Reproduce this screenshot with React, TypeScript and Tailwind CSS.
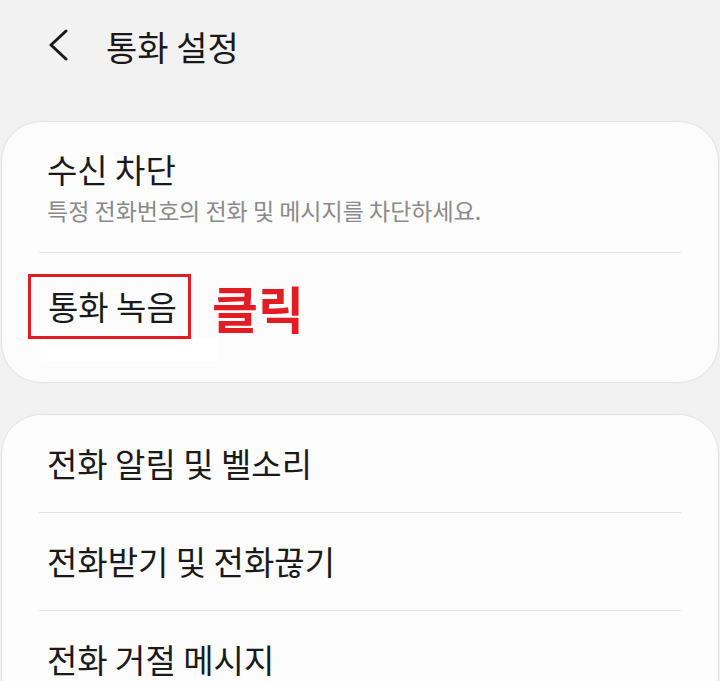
import React from "react";

const font = { fontFamily: '"Noto Sans CJK KR", "Noto Sans", sans-serif' };

function Row({ title, last }: { title: string; last?: boolean }) {
  return (
    <div className="px-[37px]">
      <div className={`h-[98px] flex items-center pl-[8px] ${last ? "" : "border-b border-[#e4e4e4]"}`}>
        <span className="text-[33px] text-[#1a1a1a]">{title}</span>
      </div>
    </div>
  );
}

export default function App() {
  return (
    <div className="w-[720px] h-[681px] overflow-hidden bg-[#f2f2f2]" style={font}>
      <div className="h-[92px] flex items-center pl-[46px]">
        <svg width="26" height="34" viewBox="0 0 26 34" className="mb-[1px]">
          <path d="M20 2 L5 16 L20 30" fill="none" stroke="#1a1a1a" strokeWidth="3" strokeLinecap="round" strokeLinejoin="round" />
        </svg>
        <span className="ml-[34px] text-[34px] text-[#1a1a1a]">통화 설정</span>
      </div>

      <div className="mt-[29px] mx-[1px] bg-[#fcfcfc] rounded-[40px] border border-[#e2e2e2]">
        <div className="px-[37px]">
          <div className="pl-[8px] pt-[27px] pb-[27px] border-b border-[#e4e4e4]">
            <div className="text-[33px] leading-[40px] text-[#1a1a1a]">수신 차단</div>
            <div className="text-[23px] leading-[30px] text-[#8a8a8a] mt-[6px]">
              특정 전화번호의 전화 및 메시지를 차단하세요.
            </div>
          </div>
        </div>
        <div className="h-[129px] pl-[26px] pt-[21px]">
          <div className="flex items-center">
            <div className="relative w-[163px] h-[65px] border-[3px] border-[#e31b23] flex items-center pl-[17px]">
              <span className="text-[33px] text-[#1a1a1a]">통화 녹음</span>
              <div className="absolute left-[10px] top-[62px] w-[176px] h-[22px] bg-white" />
            </div>
            <span className="ml-[21px] text-[50px] leading-[56px] font-bold text-[#e31b23]">클릭</span>
          </div>
        </div>
      </div>

      <div className="mt-[31px] mx-[1px] bg-[#fcfcfc] rounded-t-[40px] border border-[#e2e2e2]">
        <Row title="전화 알림 및 벨소리" />
        <Row title="전화받기 및 전화끊기" />
        <Row title="전화 거절 메시지" last />
      </div>
    </div>
  );
}
